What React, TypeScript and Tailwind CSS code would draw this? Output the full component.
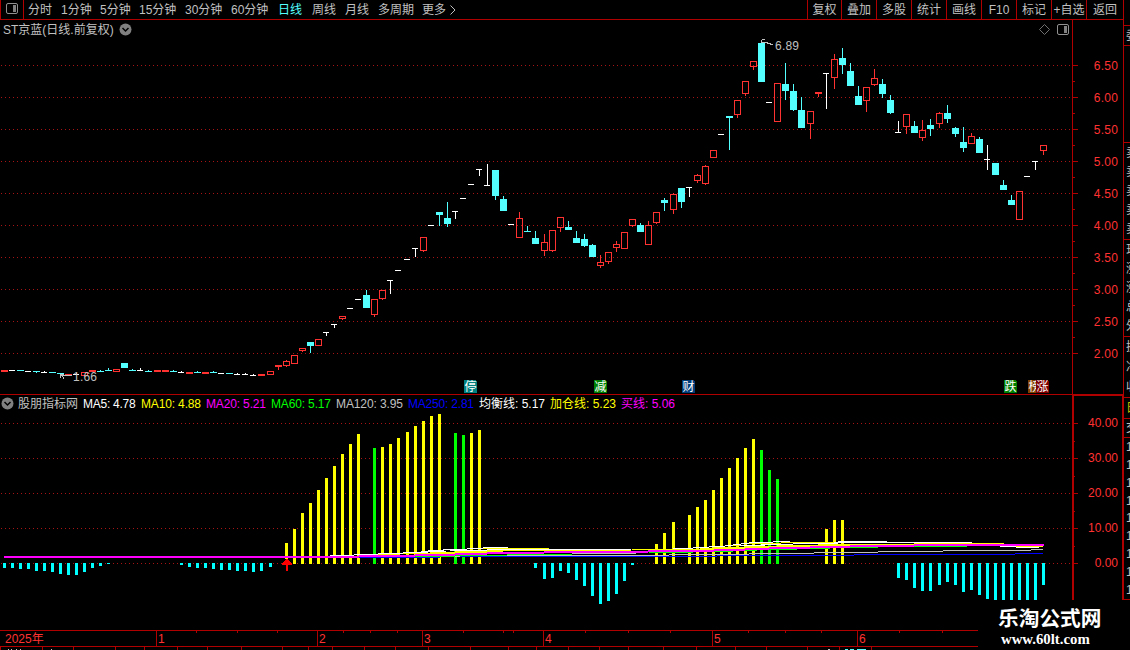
import React from "react";

type Kind = "r" | "c" | "w";
// center x, body top, body bottom, high, low, kind
type Candle = [number, number, number, number, number, Kind];

const candles: Candle[] = [
  [4, 370, 372, 370, 372, "r"], [12, 370, 371, 370, 371, "w"], [20, 370, 371, 370, 371, "c"], [28, 371, 372, 371, 372, "w"],
  [36, 371, 372, 371, 373, "c"], [44, 372, 373, 371, 373, "w"], [52, 372, 373, 372, 373, "c"], [60, 373, 374, 373, 374, "c"],
  [68, 374, 376, 374, 376, "r"], [76, 374, 375, 373, 375, "w"], [84, 372, 376, 372, 376, "r"], [92, 370, 372, 370, 372, "r"],
  [100, 371, 372, 370, 372, "c"], [108, 370, 371, 368, 371, "c"], [116, 369, 372, 369, 372, "r"], [124, 363, 368, 363, 368, "c"],
  [132, 370, 371, 369, 371, "c"], [140, 370, 371, 368, 371, "w"], [148, 371, 372, 370, 372, "c"], [157, 370, 372, 370, 372, "r"],
  [165, 370, 372, 370, 372, "r"], [173, 371, 372, 370, 372, "c"], [181, 372, 373, 371, 373, "w"], [189, 372, 374, 372, 374, "r"],
  [197, 372, 373, 371, 373, "c"], [205, 372, 374, 372, 374, "r"], [213, 372, 373, 371, 373, "c"], [221, 373, 374, 373, 374, "w"],
  [229, 373, 374, 373, 374, "c"], [237, 374, 375, 373, 375, "w"], [245, 374, 375, 373, 375, "w"], [253, 375, 376, 374, 376, "w"],
  [261, 374, 376, 374, 376, "r"], [270, 371, 375, 371, 375, "r"], [278, 365, 367, 365, 370, "r"], [286, 361, 366, 360, 367, "r"],
  [294, 355, 364, 355, 364, "r"], [302, 348, 351, 348, 352, "r"], [310, 342, 346, 342, 353, "c"], [318, 339, 346, 339, 346, "r"],
  [326, 332, 333, 332, 336, "w"], [334, 324, 325, 324, 328, "w"], [342, 316, 319, 316, 320, "r"], [350, 308, 309, 308, 309, "w"],
  [358, 299, 300, 299, 300, "w"], [366, 295, 308, 290, 308, "c"], [374, 299, 315, 299, 317, "r"], [382, 290, 299, 290, 300, "r"],
  [390, 280, 281, 280, 294, "w"], [398, 270, 271, 270, 271, "w"], [407, 259, 260, 259, 260, "w"], [415, 248, 249, 248, 257, "w"],
  [423, 237, 251, 237, 252, "r"], [431, 225, 226, 225, 226, "w"], [439, 212, 215, 212, 226, "c"], [447, 218, 224, 202, 227, "c"],
  [455, 211, 212, 211, 219, "w"], [463, 198, 199, 198, 199, "w"], [471, 184, 185, 184, 185, "w"], [479, 169, 170, 169, 176, "w"],
  [487, 185, 186, 164, 186, "w"], [495, 170, 196, 170, 200, "c"], [503, 199, 211, 196, 211, "c"], [511, 224, 225, 224, 225, "w"],
  [519, 218, 238, 212, 238, "r"], [527, 231, 232, 226, 232, "c"], [535, 238, 244, 231, 244, "c"], [544, 242, 251, 234, 256, "r"],
  [552, 230, 251, 230, 252, "r"], [560, 217, 228, 217, 232, "r"], [568, 227, 230, 221, 230, "c"], [576, 238, 243, 231, 243, "c"],
  [584, 239, 246, 234, 247, "c"], [592, 245, 257, 244, 257, "c"], [600, 262, 266, 255, 268, "r"], [608, 252, 262, 252, 264, "r"],
  [616, 244, 248, 241, 252, "r"], [624, 232, 249, 232, 249, "r"], [632, 219, 226, 219, 227, "r"], [640, 225, 232, 223, 232, "c"],
  [648, 225, 245, 221, 245, "r"], [656, 212, 223, 212, 224, "r"], [664, 200, 203, 198, 211, "c"], [673, 194, 210, 193, 214, "r"],
  [681, 188, 202, 188, 208, "c"], [689, 187, 188, 187, 197, "w"], [697, 175, 181, 174, 183, "r"], [705, 166, 184, 165, 185, "r"],
  [713, 150, 158, 150, 158, "r"], [721, 134, 135, 134, 135, "w"], [729, 116, 118, 116, 150, "c"], [737, 100, 115, 100, 118, "r"],
  [745, 81, 94, 81, 96, "r"], [753, 61, 67, 61, 70, "r"], [761, 43, 82, 43, 82, "c"], [769, 102, 103, 102, 103, "w"],
  [777, 83, 122, 83, 122, "r"], [785, 84, 91, 63, 100, "c"], [793, 91, 110, 84, 111, "c"], [801, 110, 128, 97, 128, "c"],
  [810, 111, 124, 111, 139, "r"], [818, 92, 94, 92, 97, "r"], [826, 73, 74, 73, 109, "w"], [834, 59, 78, 54, 89, "r"],
  [842, 58, 65, 48, 74, "c"], [850, 71, 86, 63, 86, "c"], [858, 96, 105, 86, 105, "c"], [866, 87, 101, 87, 112, "r"],
  [874, 78, 85, 69, 86, "r"], [882, 84, 94, 79, 98, "c"], [890, 100, 113, 95, 114, "c"], [898, 132, 133, 121, 133, "w"],
  [906, 114, 127, 114, 134, "r"], [914, 126, 133, 121, 133, "c"], [922, 130, 138, 120, 141, "r"], [930, 125, 129, 119, 136, "c"],
  [939, 113, 124, 112, 128, "r"], [947, 113, 119, 105, 123, "c"], [955, 128, 134, 127, 137, "c"], [963, 142, 148, 127, 152, "c"],
  [971, 136, 144, 133, 144, "r"], [979, 139, 153, 137, 153, "c"], [987, 159, 160, 145, 170, "w"], [995, 163, 175, 163, 175, "c"],
  [1003, 185, 190, 180, 190, "c"], [1011, 200, 205, 195, 205, "c"], [1019, 191, 220, 191, 220, "r"], [1027, 176, 177, 176, 177, "w"],
  [1035, 161, 162, 161, 170, "w"], [1043, 145, 151, 145, 155, "r"],
];

const COLORS: Record<Kind, string> = { r: "#ff3232", c: "#54ffff", w: "#ffffff" };

function CandleMark({ c }: { c: Candle }) {
  const [x, top, bottom, high, low, kind] = c;
  const hollow = kind === "r" && bottom - top > 2;
  return (
    <g fill={COLORS[kind]}>
      {high < top && <rect x={x} y={high} width={1} height={top - high} />}
      {low > bottom && <rect x={x} y={bottom} width={1} height={low - bottom} />}
      {hollow ? (
        <path
          fillRule="evenodd"
          d={`M${x - 3} ${top}h7v${bottom - top}h-7zM${x - 2} ${top + 1}h5v${bottom - top - 2}h-5z`}
        />
      ) : (
        <rect x={x - 3} y={top} width={kind === "w" ? 6 : 7} height={bottom - top} />
      )}
    </g>
  );
}

// left x, far end y
type Bar = [number, number];
const yellowBars: Bar[] = [
  [293, 529], [301, 513], [309, 503], [317, 490], [325, 478], [333, 466], [341, 454], [349, 444], [357, 434], [381, 447],
  [389, 444], [397, 438], [406, 432], [414, 426], [422, 421], [430, 416], [438, 414], [470, 433], [478, 430], [655, 544],
  [663, 533], [672, 522], [688, 515], [696, 507], [704, 500], [712, 490], [720, 478], [728, 468], [736, 458], [744, 448],
  [752, 439], [825, 529], [833, 520], [841, 520],
];
const greenBars: Bar[] = [[373, 448], [454, 433], [462, 435], [760, 450], [768, 470], [776, 479]];
const cyanBars: Bar[] = [
  [3, 568], [11, 568], [19, 569], [27, 569], [35, 571], [43, 571], [51, 572], [59, 574], [67, 575], [75, 575], [83, 572],
  [91, 568], [99, 566], [107, 564], [180, 565], [188, 567], [196, 568], [204, 568], [212, 569], [220, 570], [228, 570],
  [236, 571], [244, 571], [252, 572], [260, 571], [269, 567], [534, 568], [543, 579], [551, 578], [559, 571], [567, 573],
  [575, 580], [583, 586], [591, 596], [599, 604], [607, 601], [615, 594], [623, 581], [631, 565], [897, 578], [905, 580],
  [913, 588], [921, 591], [929, 591], [938, 585], [946, 582], [954, 585], [962, 592], [970, 590], [978, 595], [986, 599],
  [994, 600], [1002, 600], [1010, 600], [1018, 600], [1026, 600], [1034, 600], [1042, 585],
];

// x start, x end, y, thickness
type Seg = [number, number, number, number];
const blue: Seg[] = [[359, 440, 557, 1], [440, 717, 556, 1], [717, 854, 555, 1], [854, 1015, 554, 1], [1015, 1043, 553, 1]];
const gray: Seg[] = [
  [415, 460, 556, 1], [460, 669, 555, 1], [572, 636, 553, 1], [669, 749, 554, 1], [749, 814, 553, 1], [814, 878, 552, 1],
  [878, 943, 551, 1], [943, 1031, 550, 1], [1031, 1043, 549, 1],
];
const green: Seg[] = [
  [415, 455, 556, 1], [455, 507, 555, 1], [507, 572, 554, 1], [649, 693, 552, 1], [693, 733, 551, 1], [733, 757, 550, 1],
  [769, 797, 549, 1], [810, 830, 548, 1], [850, 878, 547, 1], [914, 967, 546, 1],
];
const magenta: Seg[] = [
  [4, 359, 556, 2], [359, 415, 555, 2], [415, 455, 554, 2], [455, 487, 553, 2], [487, 544, 552, 2], [544, 648, 551, 2],
  [648, 714, 550, 2], [714, 745, 549, 2], [745, 769, 548, 2], [769, 810, 547, 2], [810, 850, 546, 2], [850, 914, 545, 2],
  [914, 1044, 544, 2],
];
const yellow: Seg[] = [
  [360, 400, 554, 1], [400, 430, 553, 1], [430, 455, 552, 2], [455, 487, 551, 2], [487, 503, 550, 2], [483, 509, 548, 1],
  [509, 549, 548, 1], [503, 631, 550, 1], [632, 714, 549, 1], [700, 741, 548, 1], [714, 745, 547, 2], [733, 749, 545, 1],
  [745, 777, 546, 2], [749, 781, 543, 1], [777, 818, 545, 2], [781, 850, 542, 1], [818, 914, 544, 2], [878, 887, 541, 1],
  [914, 1004, 543, 1], [1016, 1043, 546, 1],
];
const white: Seg[] = [
  [330, 354, 555, 1], [354, 378, 554, 1], [378, 403, 553, 1], [403, 428, 552, 1], [421, 446, 551, 1], [428, 444, 550, 1],
  [443, 467, 549, 1], [467, 483, 548, 1], [483, 508, 547, 1], [450, 487, 550, 1], [487, 549, 549, 1], [549, 631, 549, 1],
  [673, 693, 548, 1], [693, 709, 547, 1], [709, 725, 546, 1], [725, 733, 545, 1], [733, 741, 544, 1], [741, 749, 543, 1],
  [749, 773, 542, 1], [773, 790, 541, 1], [740, 765, 545, 1], [761, 793, 544, 1], [793, 838, 543, 1], [838, 887, 541, 1],
  [834, 972, 542, 1], [1000, 1016, 546, 1], [1016, 1039, 547, 1],
];

function Steps({ data, color }: { data: Seg[]; color: string }) {
  return (
    <g fill={color}>
      {data.map(([a, b, y, h], i) => (
        <rect key={i} x={a} y={y} width={b - a} height={h} />
      ))}
    </g>
  );
}

const dotColumns = Array.from({ length: 268 }, (_, i) => 1 + i * 4);

function DottedLines({ ys }: { ys: number[] }) {
  return <path fill="#a81414" d={ys.map((y) => dotColumns.map((x) => `M${x} ${y}h1v1h-1z`).join("")).join("")} />;
}

const badges: [number, string, string][] = [
  [464, "#008080", "停"], [594, "#008000", "减"], [682, "#003c78", "财"], [1004, "#008000", "跌"], [1028, "#804000", "榜"], [1036, "#800000", "涨"],
];

function PriceChart() {
  return (
    <svg className="block" width="1072" height="355" viewBox="0 39 1072 355" shapeRendering="crispEdges">
      <DottedLines ys={[65, 97, 129, 161, 193, 225, 257, 289, 321, 353]} />
      {candles.map((c) => (
        <CandleMark key={c[0]} c={c} />
      ))}
      <g fill="#c0c0c0">
        <path d="M61 375h11v1h-11zM60 374h1v4h-1zM61 374h3v1h-3zM62 376h1v1h-1zM63 377h1v2h-1z" />
        <path d="M762 39h3v1h-3zM761 40h1v3h-1zM762 42h3v1h-3zM765 42h3v1h-3zM767 43h4v1h-4zM770 44h3v1h-3z" />
      </g>
      <g fill="#c0c0c0" fontSize="12">
        <text x="73" y="381" textLength="24">1.66</text>
        <text x="775" y="50" textLength="24">6.89</text>
      </g>
      {badges.map(([x, bg, label]) => (
        <g key={label}>
          <path d={`M${x} 380h11l2 2v11h-13z`} fill={bg} />
          <text x={x + 0.5} y="391" fontSize="12" fill="#fff">{label}</text>
        </g>
      ))}
    </svg>
  );
}

function IndicatorChart() {
  return (
    <svg className="block" width="1072" height="218" viewBox="0 412 1072 218" shapeRendering="crispEdges">
      <DottedLines ys={[423, 458, 493, 528, 563]} />
      <g fill="#ffff00">
        <rect x={285} y={543} width={3} height={16} />
        {yellowBars.map(([x, y]) => <rect key={x} x={x} y={y} width={3} height={564 - y} />)}
      </g>
      <g fill="#00ff00">
        {greenBars.map(([x, y]) => <rect key={x} x={x} y={y} width={3} height={564 - y} />)}
      </g>
      <g fill="#00ffff">
        {cyanBars.map(([x, y]) => <rect key={x} x={x} y={563} width={3} height={y - 563} />)}
      </g>
      <Steps data={blue} color="#0000ff" />
      <Steps data={gray} color="#c0c0c0" />
      <Steps data={green} color="#00ff00" />
      <Steps data={yellow} color="#ffff00" />
      <Steps data={white} color="#ffffff" />
      <Steps data={magenta} color="#ff00ff" />
      <path d="M286 559h2v1h1v1h1v1h1v1h1v2h-4v6h-2v-6h-4v-2h1v-1h1v-1h1v-1h1z" fill="#ff0000" />
    </svg>
  );
}

function ChevronBadge() {
  return (
    <svg width="13" height="13" viewBox="0 0 13 13">
      <circle cx="6.5" cy="6.5" r="6" fill="#808080" />
      <path d="M3.5 5l3 3 3-3" stroke="#000" strokeWidth="1.5" fill="none" />
    </svg>
  );
}

function PanelIcon() {
  return (
    <svg width="12" height="12" viewBox="0 0 12 12">
      <rect x="0.5" y="0.5" width="11" height="10" rx="1.5" fill="none" stroke="#909090" />
      <rect x="7" y="2" width="3" height="7" fill="#808080" />
    </svg>
  );
}

const periods: [string, string][] = [
  ["分时", "w-[33px]"], ["1分钟", "w-[39px]"], ["5分钟", "w-[39px]"], ["15分钟", "w-[46px]"], ["30分钟", "w-[46px]"],
  ["60分钟", "w-[47px]"], ["日线", "w-[34px] text-[#54ffff]"], ["周线", "w-[33px]"], ["月线", "w-[33px]"], ["多周期", "w-[44px]"], ["更多", "w-[28px]"],
];
const actions: [string, string][] = [
  ["复权", "w-[34px]"], ["叠加", "w-[35px]"], ["多股", "w-[35px]"], ["统计", "w-[35px]"], ["画线", "w-[35px]"],
  ["F10", "w-[35px]"], ["标记", "w-[35px]"], ["+自选", "w-[35px]"], ["返回", "w-[37px]"],
];

const readouts: [string, string][] = [
  ["股朋指标网", "w-[65px] text-[#c0c0c0]"],
  ["MA5: 4.78", "w-[58px] text-white tracking-[-0.25px]"],
  ["MA10: 4.88", "w-[65px] text-[#ffff00] tracking-[-0.15px]"],
  ["MA20: 5.21", "w-[65px] text-[#ff00ff] tracking-[-0.15px]"],
  ["MA60: 5.17", "w-[65px] text-[#00ff00] tracking-[-0.15px]"],
  ["MA120: 3.95", "w-[72px] text-[#c0c0c0] tracking-[-0.1px]"],
  ["MA250: 2.81", "w-[71px] text-[#0000ff] tracking-[-0.2px]"],
  ["均衡线: 5.17", "w-[71px] text-white"],
  ["加仓线: 5.23", "w-[71px] text-[#ffff00]"],
  ["买线: 5.06", "w-[60px] text-[#ff00ff]"],
];

const months: [string, string][] = [
  ["2025年", "w-[156px] pl-[5px]"], ["1", "w-[161px] border-l"], ["2", "w-[105px] border-l"], ["3", "w-[121px] border-l"],
  ["4", "w-[169px] border-l"], ["5", "w-[145px] border-l"], ["6", "w-[266px] border-l"],
];
const weekTicks = [196, 237, 277, 343, 370, 397, 463, 503, 513, 585, 628, 670, 748, 785, 821, 899, 942];
const lowerTicks = [0, 42, 73, 115, 144, 177, 207, 241, 282, 308, 332, 364, 395, 428, 470, 508, 536, 568, 599, 628, 663, 696, 735, 766, 807, 839, 871];

const prices = ["6.50", "6.00", "5.50", "5.00", "4.50", "4.00", "3.50", "3.00", "2.50", "2.00"];
const levels = ["40.00", "30.00", "20.00", "10.00", "0.00"];

function SideCell({ rows, className }: { rows: string[]; className: string }) {
  return (
    <div className={`flex w-full shrink-0 flex-col justify-around overflow-hidden border-b border-[#b00000] pl-[2px] ${className}`}>
      {rows.map((r, i) => (
        <span key={i} className="block h-3 w-3 leading-3">{r}</span>
      ))}
    </div>
  );
}

export default function App() {
  return (
    <div className="relative flex h-[650px] w-[1130px] overflow-hidden bg-black font-['Liberation_Sans','Noto_Sans_CJK_SC',sans-serif] text-[12px] leading-none whitespace-nowrap text-[#c0c0c0]">
      <main className="flex w-[1123px] shrink-0 flex-col">
        <header className="flex h-[20px] shrink-0 border-b border-[#b00000]">
          <div className="flex w-6 items-center justify-center border-x border-[#b00000] pb-px">
            <PanelIcon />
          </div>
          <nav className="flex items-center pl-1">
            {periods.map(([t, c]) => <span key={t} className={c}>{t}</span>)}
            <svg width="6" height="10" viewBox="0 0 6 10"><path d="M0.5 0.5L5 5L0.5 9.5" fill="none" stroke="#c0c0c0" /></svg>
          </nav>
          <div className="ml-auto flex">
            {actions.map(([t, c]) => (
              <span key={t} className={`flex items-center justify-center border-l border-[#b00000] ${c}`}>{t}</span>
            ))}
          </div>
        </header>

        <section className="flex h-[375px] shrink-0 border-b border-[#b00000]">
          <div className="w-[1072px] shrink-0">
            <div className="flex h-[19px] items-center pl-[3px]">
              <span className="w-[116px]">ST京蓝(日线.前复权)</span>
              <ChevronBadge />
              <div className="ml-auto flex items-center gap-[7px] pr-[3px]">
                <svg width="11" height="11" viewBox="0 0 11 11"><path d="M5.5 0.5l5 5-5 5-5-5z" fill="none" stroke="#707070" /></svg>
                <PanelIcon />
              </div>
            </div>
            <PriceChart />
          </div>
          <div className="flex flex-1 border-l border-[#b00000] text-[#ff3232]">
            <svg className="block" width="6" height="374" viewBox="1073 20 6 374" shapeRendering="crispEdges" fill="#b00000">
              {prices.map((p, i) => (
                <g key={p}>
                  <rect x={1073} y={65 + i * 32} width={5} height={1} />
                  {i < 9 && <rect x={1073} y={81 + i * 32} width={2} height={1} />}
                </g>
              ))}
            </svg>
            <div className="flex-1 pt-[30px] pr-[5px] text-right">
              {prices.map((p) => <div key={p} className="h-8 leading-8 tracking-[0.2px]">{p}</div>)}
            </div>
          </div>
        </section>

        <section className="flex h-[235px] shrink-0">
          <div className="w-[1072px] shrink-0">
            <div className="flex h-[17px] items-center pl-[1px]">
              <span className="w-[17px]"><ChevronBadge /></span>
              {readouts.map(([t, c]) => <span key={t} className={c}>{t}</span>)}
            </div>
            <IndicatorChart />
          </div>
          <div className="flex flex-1 border-t border-r border-l-2 border-[#b00000] text-[#ff3232]">
            <svg className="block" width="5" height="234" viewBox="1074 396 5 234" shapeRendering="crispEdges" fill="#b00000">
              {levels.map((p, i) => (
                <g key={p}>
                  <rect x={1074} y={423 + i * 35} width={4} height={1} />
                  {i < 4 && <rect x={1074} y={441 + i * 35} width={1} height={1} />}
                </g>
              ))}
            </svg>
            <div className="flex-1 pt-[10px] pr-[4px] text-right">
              {levels.map((p) => <div key={p} className="h-[35px] leading-[35px]">{p}</div>)}
            </div>
          </div>
        </section>

        <footer className="relative flex h-[17px] shrink-0 border-y border-[#b00000] text-[#ff3232]">
          {months.map(([t, c], i) => (
            <span key={t} className={`flex items-center border-[#b00000] ${i > 0 ? "pl-px" : ""} ${c}`}>{t}</span>
          ))}
          <svg className="absolute top-0 left-0" width="978" height="3" shapeRendering="crispEdges" fill="#b00000">
            {weekTicks.map((x) => <rect key={x} x={x} y={0} width={1} height={2} />)}
          </svg>
        </footer>
        <svg className="block" width="978" height="3" shapeRendering="crispEdges" fill="#b00000">
          {lowerTicks.map((x) => <rect key={x} x={x} y={0} width={1} height={3} />)}
          <path d="M8 2h1v1h-1zM11 2h1v1h-1zM16 2h1v1h-1zM20 2h1v1h-1zM51 2h1v1h-1zM828 2h2v1h-2z" fill="#c0c0c0" />
          <path d="M845 2h3v1h-3zM850 2h4v1h-4zM857 2h9v1h-9z" fill="#54ffff" />
        </svg>
      </main>

      <aside className="flex w-[7px] shrink-0 flex-col overflow-hidden border-l border-[#b00000]">
        <SideCell rows={[]} className="h-[26px]" />
        <SideCell rows={["委"]} className="h-[20px]" />
        <SideCell rows={[]} className="h-[97px]" />
        <SideCell rows={["卖", "卖", "卖", "卖", "卖"]} className="h-[97px]" />
        <SideCell rows={["现", "涨", "涨", "总", "外"]} className="h-[97px]" />
        <SideCell rows={["换", "净", "收"]} className="h-[61px]" />
        <SideCell rows={["日"]} className="h-[21px] text-[#c0c000]" />
        <SideCell rows={["交"]} className="h-[19px]" />
        <SideCell rows={["1", "1", "1", "1", "1", "1", "1", "1", "1"]} className="h-[162px]" />
      </aside>

      <div className="absolute top-[600px] left-[978px] flex h-[50px] w-[152px] flex-col items-start bg-black text-white">
        <span className="mt-[8px] ml-[20px] text-[20.7px] leading-[22px] font-bold">乐淘公式网</span>
        <span className="mt-[2px] ml-[23px] font-['Liberation_Serif',serif] text-[14.8px] leading-[15px] font-bold">www.60lt.com</span>
      </div>
    </div>
  );
}
